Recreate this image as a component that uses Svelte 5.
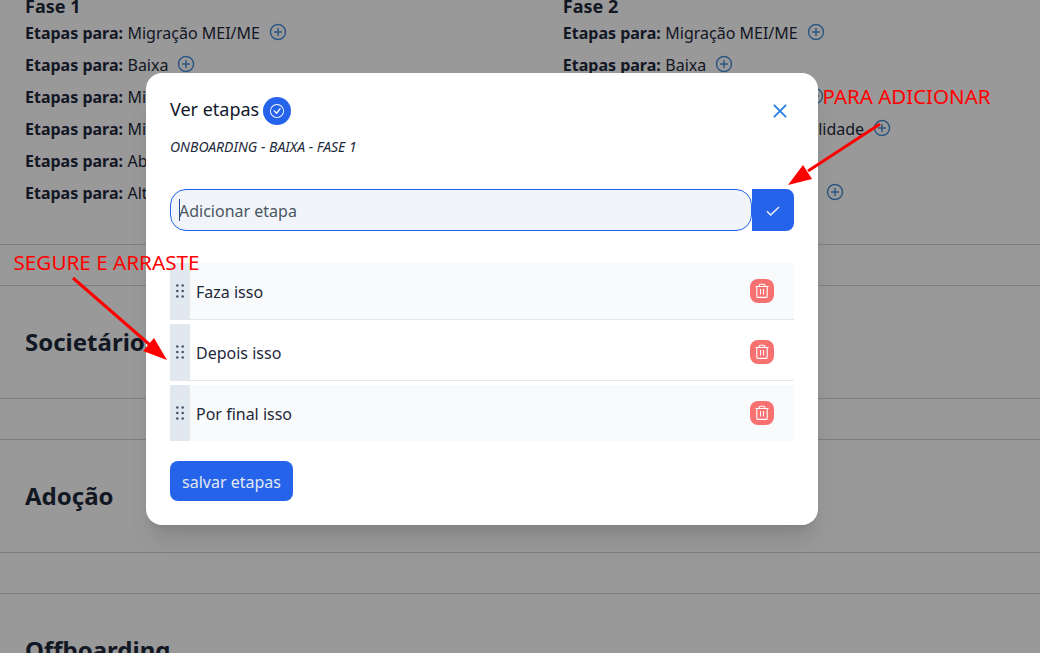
<script>
  const left = ['Migração MEI/ME', 'Baixa', 'Migração', 'Migração', 'Abertura', 'Alteração'];
  const right = [
    { name: 'Migração MEI/ME', cls: '' },
    { name: 'Baixa', cls: '' },
    { name: 'Migração', cls: 'w3' },
    { name: 'Migração de contabilidade', cls: 'w4' },
    { name: 'Abertura', cls: '' },
    { name: 'Alteração', cls: 'w6' }
  ];
  const steps = ['Faza isso', 'Depois isso', 'Por final isso'];
  const sections = ['Societário', 'Adoção', 'Offboarding'];
</script>

{#snippet plus()}
  <svg class="plus" width="16" height="16" viewBox="0 0 16 16" fill="currentColor">
    <path d="M8 15A7 7 0 1 1 8 1a7 7 0 0 1 0 14m0 1A8 8 0 1 0 8 0a8 8 0 0 0 0 16" />
    <path d="M8 4a.5.5 0 0 1 .5.5v3h3a.5.5 0 0 1 0 1h-3v3a.5.5 0 0 1-1 0v-3h-3a.5.5 0 0 1 0-1h3v-3A.5.5 0 0 1 8 4" />
  </svg>
{/snippet}

<div class="page">
  <section class="phases">
    <div class="phase">
      <h3>Fase 1</h3>
      {#each left as name}
        <p><b>Etapas para:</b><span>{name}</span>{@render plus()}</p>
      {/each}
    </div>
    <div class="phase">
      <h3>Fase 2</h3>
      {#each right as r}
        <p><b>Etapas para:</b><span class={r.cls}>{r.name}</span>{@render plus()}</p>
      {/each}
    </div>
  </section>
  {#each sections as s}
    <section class="box"><h2>{s}</h2></section>
  {/each}

  <div class="overlay">
    <div class="modal">
      <header>
        <h1>Ver etapas</h1>
        <span class="badge">
          <svg width="14" height="14" viewBox="0 0 16 16" fill="currentColor">
            <path d="M8 15A7 7 0 1 1 8 1a7 7 0 0 1 0 14m0 1A8 8 0 1 0 8 0a8 8 0 0 0 0 16" />
            <path d="m10.97 4.97-.02.022-3.473 4.425-2.093-2.094a.75.75 0 0 0-1.06 1.06L6.97 11.03a.75.75 0 0 0 1.079-.02l3.992-4.99a.75.75 0 0 0-1.071-1.05" />
          </svg>
        </span>
        <svg class="close" width="14" height="14" viewBox="0 0 14 14"><path d="M.9.9 13.1 13.1M13.1.9.9 13.1" /></svg>
      </header>
      <p class="sub">ONBOARDING - BAIXA - FASE 1</p>
      <div class="field">
        <div class="input"><i></i><span>Adicionar etapa</span></div>
        <button class="ok" aria-label="Adicionar"><svg width="14" height="10" viewBox="0 0 14 10"><path d="M1 5.2 4.7 8.9 13 .9" /></svg></button>
      </div>
      <ul>
        {#each steps as step}
          <li>
            <span class="grip">
              <svg width="10" height="14" viewBox="0 0 10 14">
                {#each [1.5, 7, 12.5] as cy}
                  <circle cx="2.3" {cy} r="1.3" /><circle cx="7.7" {cy} r="1.3" />
                {/each}
              </svg>
            </span>
            <span class="name">{step}</span>
            <button class="del" aria-label="Excluir">
              <svg width="14" height="16" viewBox="0 0 14 16"><path d="M.5 3.5h13M4.2 3.3V2.2q0-1 1-1h3.6q1 0 1 1v1.1M1.8 3.7V13.5q0 .9.9.9h8.6q.9 0 .9-.9V3.7M5.5 6v5.5M8.5 6v5.5" /></svg>
            </button>
          </li>
        {/each}
      </ul>
      <button class="save">salvar etapas</button>
    </div>
  </div>

  <svg class="notes" width="1040" height="653" viewBox="0 0 1040 653">
    <path d="M880 124 808 171M73 278 150 345" />
    <polygon points="788,185 803,165 812,179" />
    <polygon points="167,360 143,351 154,338" />
    <text x="822.5" y="104" textLength="168" lengthAdjust="spacingAndGlyphs">PARA ADICIONAR</text>
    <text x="13.5" y="270" textLength="186" lengthAdjust="spacingAndGlyphs">SEGURE E ARRASTE</text>
  </svg>
</div>

<style>
  :global(body) { background: #fff; overflow: hidden; }
  .page { position: relative; height: 653px; overflow: hidden; font: 16px/24px "Noto Sans", sans-serif; color: #1e293b; }
  h1, h2, h3, p, ul { margin: 0; padding: 0; }
  button { border: 0; padding: 0; font: inherit; }
  .phases { box-sizing: border-box; height: 245px; border-bottom: 1px solid #cbd5e1; padding-left: 25px; display: grid; grid-template-columns: 537.8px 1fr; overflow: hidden; }
  .phase { margin-top: -8px; white-space: nowrap; }
  h3 { font-size: 18px; line-height: 28px; }
  .phase p { display: flex; height: 24px; margin-bottom: 8px; line-height: 26px; }
  .phase span { margin-left: 4.5px; }
  .plus { margin: 4px 0 0 9.8px; color: #2b7fd0; stroke: currentColor; stroke-width: .25; overflow: visible; }
  .phase .w3 { width: 132px; }
  .phase .w4 { width: 198.8px; display: flex; justify-content: flex-end; }
  .phase .w6 { width: 151.5px; }
  .box { box-sizing: border-box; height: 114px; margin-top: 40px; border: solid #cbd5e1; border-width: 1px 0; padding: 40px 25px; }
  h2 { font-size: 24px; line-height: 32px; }
  .overlay { position: absolute; inset: 0; background: rgba(0, 0, 0, .4); display: flex; justify-content: center; align-items: flex-start; padding: 73px 76px 0 0; }
  .modal { box-sizing: border-box; width: 672px; height: 452px; padding: 24px; border-radius: 16px; background: #fff; box-shadow: 0 20px 25px -5px rgba(0, 0, 0, .1), 0 8px 10px -6px rgba(0, 0, 0, .1); }
  header { display: flex; height: 28px; align-items: center; }
  h1 { font-size: 18px; font-weight: 400; line-height: 28px; color: #0f172a; margin-top: -4px; }
  .badge { width: 28px; height: 28px; margin-left: 4px; border-radius: 50%; background: #2563eb; color: #fff; display: grid; place-items: center; }
  .close { margin: 0 7px 0 auto; fill: none; stroke: #2680e0; stroke-width: 1.9; }
  .sub { margin-top: 12px; font-size: 14px; line-height: 20px; font-style: italic; }
  .field { display: flex; margin-top: 32px; height: 42px; }
  .input { box-sizing: border-box; width: 582px; border: 1px solid #2563eb; border-radius: 16px; background: #f1f5f9; padding-left: 8px; color: #4b5563; display: flex; align-items: center; }
  .input span { line-height: 24px; padding-top: 2px; }
  .input i { width: 1px; height: 22px; background: #1e4aa0; margin-right: -1px; }
  .ok { width: 42px; background: #2563eb; border-radius: 0 8px 8px 0; display: grid; place-items: center; }
  .ok svg { margin-top: 1px; }
  .ok path { fill: none; stroke: #f1f5f9; stroke-width: 1.4; }
  ul { list-style: none; margin-top: 32px; }
  li { box-sizing: border-box; height: 57px; margin-bottom: 4px; display: flex; border-bottom: 1px solid #e2e8f0; }
  li:nth-child(odd) { background: #f8fafc; }
  li:last-child { height: 56px; border: 0; }
  .grip { box-sizing: border-box; width: 20px; height: 57px; padding-bottom: 1px; background: #e2e8f0; display: grid; place-items: center; fill: #475569; }
  li:last-child .grip { height: 56px; padding: 0; }
  .name { margin-left: 6px; line-height: 58px; flex: 1; }
  .del { width: 24px; height: 24px; margin: 16px 20px 0 0; border-radius: 8px; background: #f87171; display: grid; place-items: center; }
  .del path { fill: none; stroke: #fff; stroke-width: 1.1; }
  .save { display: block; margin-top: 20px; width: 123px; height: 40px; border-radius: 8px; background: #2563eb; color: #e2e8f0; line-height: 42px; }
  .notes { position: absolute; inset: 0; }
  .notes path { stroke: red; stroke-width: 3; }
  .notes polygon, .notes text { fill: red; }
  .notes text { font: 400 20px "Noto Sans", sans-serif; }
</style>
